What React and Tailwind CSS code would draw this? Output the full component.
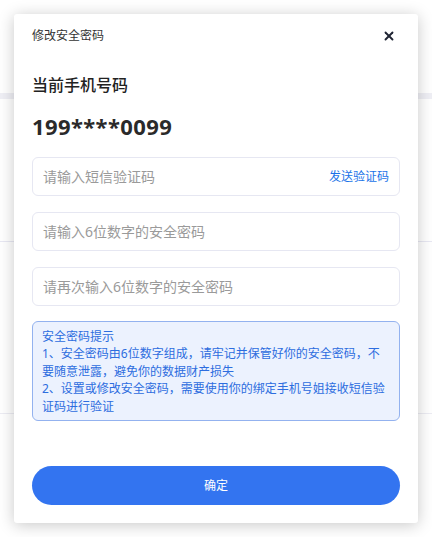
import { X } from 'lucide-react'

const font = { fontFamily: '"Noto Sans", "Noto Sans CJK SC", sans-serif' }

function Field({ placeholder, action }) {
  return (
    <div className="flex items-center h-[39px] px-[10px] border border-[#e6e7f2] rounded-[6px]">
      <input
        className="flex-1 min-w-0 bg-transparent outline-none text-[14px] text-[#333] placeholder:text-[#9a9a9a]"
        placeholder={placeholder}
      />
      {action && (
        <button className="text-[12px] text-[#1a73e8] shrink-0">{action}</button>
      )}
    </div>
  )
}

export default function App() {
  return (
    <div className="relative w-[432px] h-[537px] bg-white overflow-hidden" style={font}>
      {/* faint page behind the dialog */}
      <div className="absolute left-0 right-0 top-[93px] h-[6px] bg-[#efeff5]" />
      <div className="absolute left-0 right-0 top-[241px] h-px bg-[#e8e8f3]" />
      <div className="absolute left-0 right-0 top-[413px] h-px bg-[#ececf3]" />

      <div className="absolute left-[14px] top-[14px] w-[404px] h-[509px] bg-white rounded-[3px] shadow-[0_2px_16px_rgba(0,0,0,0.22)] flex flex-col px-[18px]">
        <div className="flex items-center justify-between h-[42px] pt-[1px]">
          <span className="text-[12px] text-[#333]">修改安全密码</span>
          <X className="w-[14px] h-[14px] text-[#1f2433] mr-[4px]" strokeWidth={3.2} />
        </div>

        <div className="mt-[19px] text-[16px] font-medium text-[#222] leading-[20px]">当前手机号码</div>
        <div className="mt-[16px] text-[22px] font-bold text-[#2a2a2a] leading-[30px] tracking-[0.4px]">199****0099</div>

        <div className="mt-[16px] flex flex-col gap-[16px]">
          <Field placeholder="请输入短信验证码" action="发送验证码" />
          <Field placeholder="请输入6位数字的安全密码" />
          <Field placeholder="请再次输入6位数字的安全密码" />
        </div>

        <div className="mt-[15px] bg-[#ecf2fe] border border-[#93b2ef] rounded-[6px] px-[9px] pt-[6px] pb-[5px] text-[12px] leading-[17.4px] text-[#2d6ddf]">
          <p>安全密码提示</p>
          <p>1、安全密码由6位数字组成，请牢记并保管好你的安全密码，不要随意泄露，避免你的数据财产损失</p>
          <p>2、设置或修改安全密码，需要使用你的绑定手机号姐接收短信验证码进行验证</p>
        </div>

        <button className="mt-auto mb-[18px] h-[39px] w-full rounded-full bg-[#3374f0] text-white text-[12px]">
          确定
        </button>
      </div>
    </div>
  )
}
